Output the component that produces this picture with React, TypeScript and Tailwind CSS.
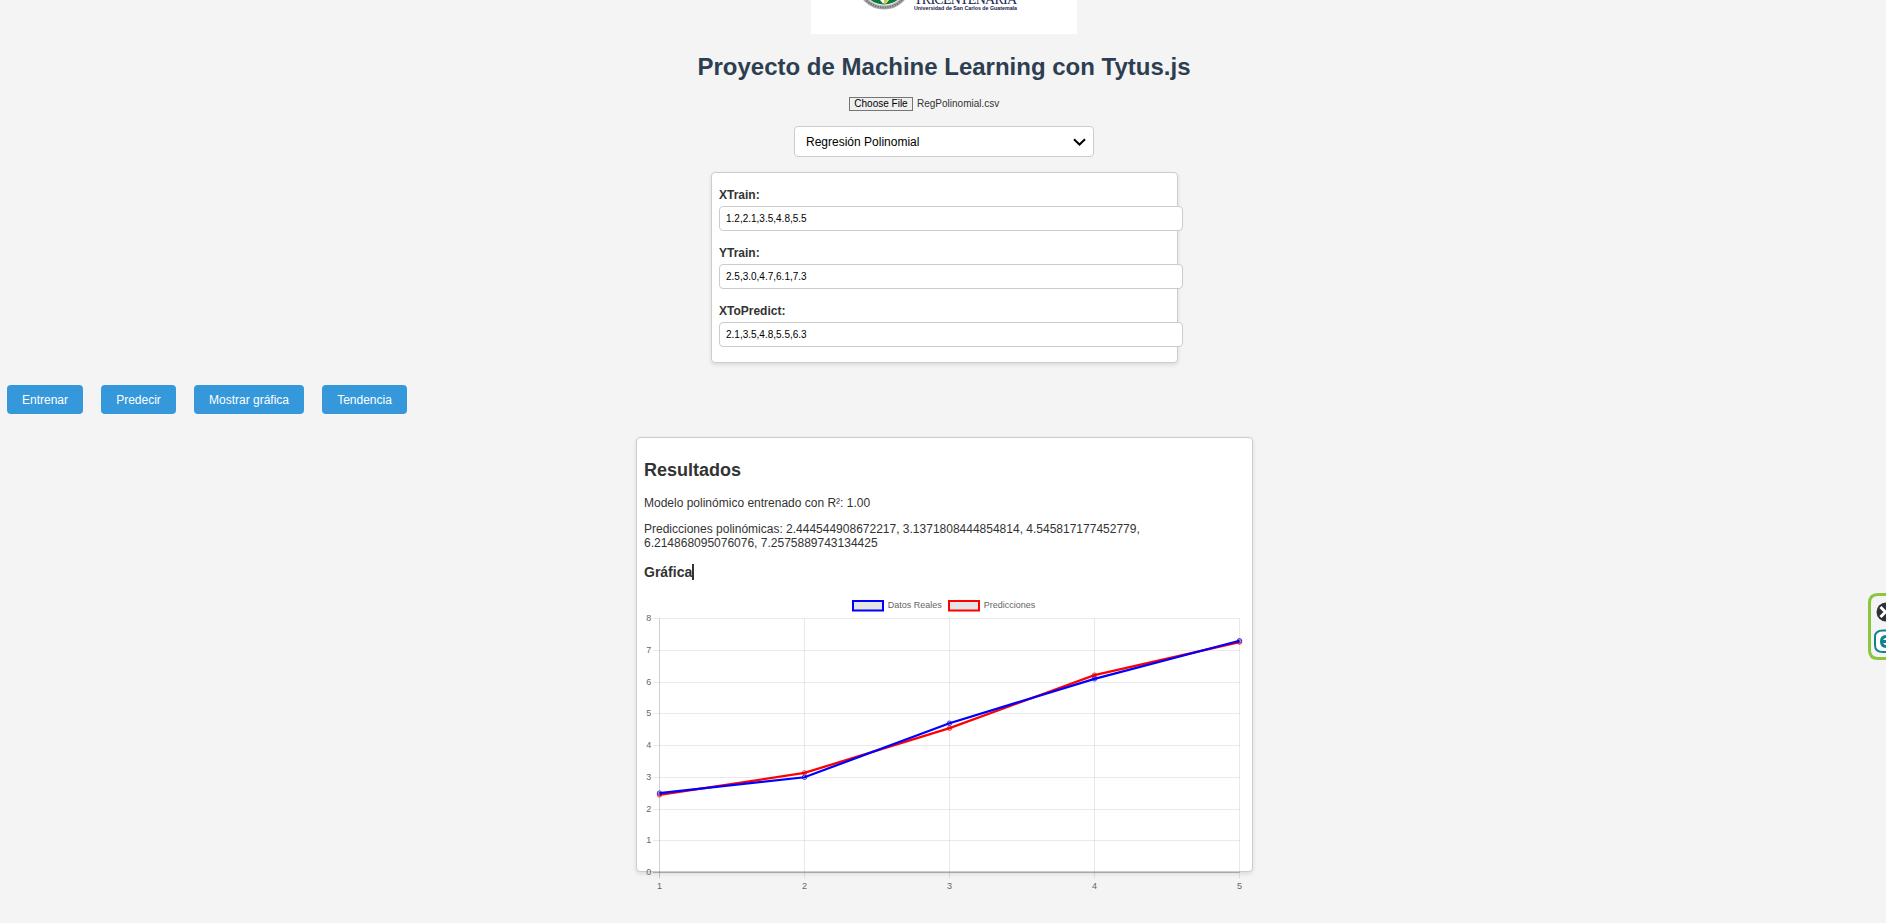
const T = "font-['Liberation_Sans',Arial,sans-serif]";

const fields = [
  { label: "XTrain:", value: "1.2,2.1,3.5,4.8,5.5" },
  { label: "YTrain:", value: "2.5,3.0,4.7,6.1,7.3" },
  { label: "XToPredict:", value: "2.1,3.5,4.8,5.5,6.3" },
];

const real = [2.5, 3.0, 4.7, 6.1, 7.3];
const predicted = [2.4445, 3.1372, 4.5458, 6.2149, 7.2576];

const X0 = 15.5;
const DX = 145;
const Y0 = 280.5;
const DY = 31.75;
const px = (i: number) => X0 + DX * i;
const py = (v: number) => Y0 - DY * v;
const gridY = (v: number) => Math.floor(py(v)) + 0.5;

function Series({ data, color }: { data: number[]; color: string }) {
  return (
    <g stroke={color}>
      <polyline points={data.map((v, i) => `${px(i)},${py(v)}`).join(" ")} fill="none" strokeWidth="2.25" />
      {data.map((v, i) => (
        <circle key={i} cx={px(i)} cy={py(v)} r="2.25" fill="#000" fillOpacity="0.1" strokeWidth="0.75" />
      ))}
    </g>
  );
}

function Chart() {
  return (
    <svg width="602" height="302" className="block shrink-0 overflow-visible" fontSize="9" fill="#666">
      <g fill="#e5e5e5" strokeWidth="2">
        <rect x="209" y="9" width="30" height="9.500" stroke="#00f" />
        <rect x="305" y="9" width="30" height="9.500" stroke="#f00" />
      </g>
      <text x="243.8" y="16.2">Datos Reales</text>
      <text x="339.8" y="16.2">Predicciones</text>
      {[0, 1, 2, 3, 4, 5, 6, 7, 8].map((v) => (
        <g key={v}>
          <line x1="9" x2={px(4)} y1={gridY(v)} y2={gridY(v)} stroke="#000" strokeOpacity={v === 0 ? 0.25 : 0.085} />
          <text x="7.3" y={gridY(v) + 2.2} textAnchor="end">{v}</text>
        </g>
      ))}
      {[0, 1, 2, 3, 4].map((i) => (
        <g key={i}>
          <line x1={px(i)} x2={px(i)} y1={py(8)} y2="286.5" stroke="#000" strokeOpacity={i === 0 ? 0.18 : 0.085} />
          <text x={px(i)} y="296.5" textAnchor="middle">{i + 1}</text>
        </g>
      ))}
      <Series data={predicted} color="#f00" />
      <Series data={real} color="#00f" />
    </svg>
  );
}

function Logo() {
  return (
    <svg width="266" height="34" className="block bg-white">
      <circle cx="73" cy="-18" r="25.5" fill="#eee" stroke="#aaa" strokeWidth="4" />
      <circle cx="73" cy="-18" r="25.500" fill="none" stroke="#777" strokeWidth="2" strokeDasharray="1.5 1" />
      <circle cx="73" cy="-18" r="22.5" fill="#0b7a3b" />
      <path d="M69 0h9l-3 3.500h-3z" fill="#fff" />
      <path d="M73 0h4l-2 3h-2z" fill="#e5c32f" />
      <text x="103" y="3.500" fontSize="14" fill="#14224d" textLength="103" fontFamily="Liberation Serif, serif">TRICENTENARIA</text>
      <text x="103" y="10" fontSize="5.6" fontWeight="bold" fill="#14224d" textLength="103" lengthAdjust="spacingAndGlyphs">Universidad de San Carlos de Guatemala</text>
    </svg>
  );
}

export default function App() {
  return (
    <div className={`${T} relative flex h-[923px] flex-col overflow-hidden bg-[#f4f4f4] text-[12px] leading-[14px] text-[#333]`}>
      <header className="flex flex-col items-center pl-[2px]">
        <Logo />
        <h1 className="mt-[19px] text-[24px] leading-[28px] font-bold text-[#2c3e50]">Proyecto de Machine Learning con Tytus.js</h1>
        <div className="mt-4 flex h-[14px] w-[190px] items-center gap-1 text-[10px] leading-[12px]">
          <button className="h-[14px] w-16 border border-[#767676] bg-[#efefef] text-black">Choose File</button>
          <span>RegPolinomial.csv</span>
        </div>
        <div className="mt-[15px] flex h-[31px] w-[300px] items-center justify-between rounded-[4px] border border-[#ccc] bg-white pr-[7px] pl-[11px] text-black">
          <span>Regresión Polinomial</span>
          <svg width="13" height="8" fill="none" stroke="#000" strokeWidth="2"><path d="M1 1.200 6.500 6.500 12 1.200" /></svg>
        </div>
      </header>

      <form className="mt-[15px] ml-[711px] flex h-[191px] w-[467px] flex-col gap-[15px] rounded-[4px] border border-[#ccc] bg-white pt-[15px] pl-[7px] shadow-[0_2px_4px_rgba(0,0,0,0.1)]">
        {fields.map((f) => (
          <div key={f.label} className="flex flex-col gap-1">
            <label className="font-bold">{f.label}</label>
            <input readOnly value={f.value} className="h-[25px] w-[464px] rounded-[4px] border border-[#ccc] bg-white px-[6px] text-[10px] text-black" />
          </div>
        ))}
      </form>

      <div className="mt-[22px] ml-[7px] flex h-[29px] gap-[18px] text-white">
        <button className="w-[76px] rounded-[4px] bg-[#3498db]">Entrenar</button>
        <button className="w-[75px] rounded-[4px] bg-[#3498db]">Predecir</button>
        <button className="w-[110px] rounded-[4px] bg-[#3498db]">Mostrar gráfica</button>
        <button className="w-[85px] rounded-[4px] bg-[#3498db]">Tendencia</button>
      </div>

      <section className="mt-[23px] ml-[636px] flex h-[435px] w-[617px] flex-col rounded-[4px] border border-[#ccc] bg-white px-[7px] pt-[21px] shadow-[0_2px_4px_rgba(0,0,0,0.1)]">
        <h2 className="text-[18px] leading-[22px] font-bold">Resultados</h2>
        <p className="mt-[15px]">Modelo polinómico entrenado con R²: 1.00</p>
        <p className="mt-3 w-[540px]">Predicciones polinómicas: 2.444544908672217, 3.1371808444854814, 4.545817177452779, 6.214868095076076, 7.2575889743134425</p>
        <h3 className="mt-[14px] flex h-4 text-[14px] leading-4 font-bold">
          Gráfica<span className="h-4 w-[1.500px] bg-[#333]" />
        </h3>
        <div className="mt-3 flex">
          <Chart />
        </div>
      </section>

      <aside className="absolute top-[593px] left-[1868px]">
        <svg width="18" height="67" fill="none">
          <path d="M18 1.500H10Q1.500 1.500 1.500 10V57Q1.500 65.500 10 65.500H18" stroke="#8cc63f" strokeWidth="3" />
          <circle cx="18" cy="19" r="9.500" fill="#2d3138" />
          <path d="m12.500 14 5 5-5 5" stroke="#fff" strokeWidth="3" />
          <path d="M18 37.500H15Q7 37.500 7 44V52Q7 59 15 59H18" fill="#fff" stroke="#128091" strokeWidth="2" />
          <path d="M18.500 43.500Q13.500 43.500 13.500 48.500T18.500 53.500M13.500 48.500h5" stroke="#128091" strokeWidth="3" />
        </svg>
      </aside>
    </div>
  );
}
